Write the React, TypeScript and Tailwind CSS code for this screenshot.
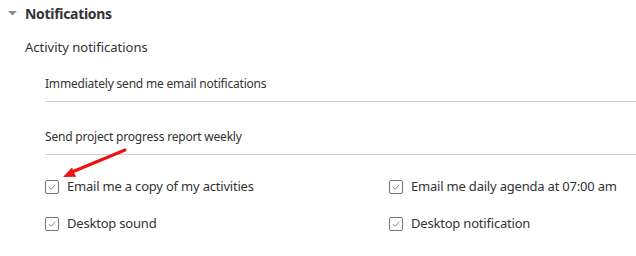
import React from "react";

function Check({ label }: { label: string }) {
  return (
    <div className="flex items-center h-[20px]">
      <div className="w-[14px] h-[14px] border border-[#777] rounded-[2px] flex items-center justify-center bg-white">
        <svg width="10" height="10" viewBox="0 0 10 10">
          <path d="M2 5.2 L4.2 7.3 L8.2 2.8" fill="none" stroke="#888" strokeWidth="1" />
        </svg>
      </div>
      <span className="ml-[8px] text-[13px] tracking-[-0.2px] text-[#333]">{label}</span>
    </div>
  );
}

export default function App() {
  return (
    <div
      className="relative w-[636px] h-[256px] bg-white overflow-hidden"
      style={{ fontFamily: '"Noto Sans", "Open Sans", sans-serif' }}
    >
      <div className="flex items-center h-[26px] pl-[8px]">
        <svg width="9" height="6" viewBox="0 0 9 6" className="mt-[1px]">
          <path d="M0 0 L9 0 L4.5 4.5 Z" fill="#888" />
        </svg>
        <span className="ml-[8px] text-[14px] tracking-[-0.3px] font-bold text-[#333]">Notifications</span>
      </div>
      <div className="pl-[25px] mt-[9px] h-[26px] flex items-center text-[13px] text-[#333]">
        Activity notifications
      </div>
      <div className="ml-[45px]">
        <div className="h-[41px] pt-[14px] border-b border-[#cfcfcf] text-[12px] tracking-[-0.2px] text-[#333]">
          <div className="h-[18px] flex items-center">Immediately send me email notifications</div>
        </div>
        <div className="h-[53px] pt-[26px] border-b border-[#cfcfcf] text-[12px] tracking-[-0.2px] text-[#333]">
          <div className="h-[18px] flex items-center">Send project progress report weekly</div>
        </div>
        <div className="grid grid-cols-[344px_1fr] gap-y-[17px] pt-[22px]">
          <Check label="Email me a copy of my activities" />
          <Check label="Email me daily agenda at 07:00 am" />
          <Check label="Desktop sound" />
          <Check label="Desktop notification" />
        </div>
      </div>
      <svg className="absolute left-0 top-0 pointer-events-none" width="636" height="256">
        <line x1="125" y1="150" x2="72" y2="172" stroke="#ee1111" strokeWidth="3" strokeLinecap="round" />
        <path d="M63 177 L72 167.6 L76 176.8 Z" fill="#ee1111" />
      </svg>
    </div>
  );
}
